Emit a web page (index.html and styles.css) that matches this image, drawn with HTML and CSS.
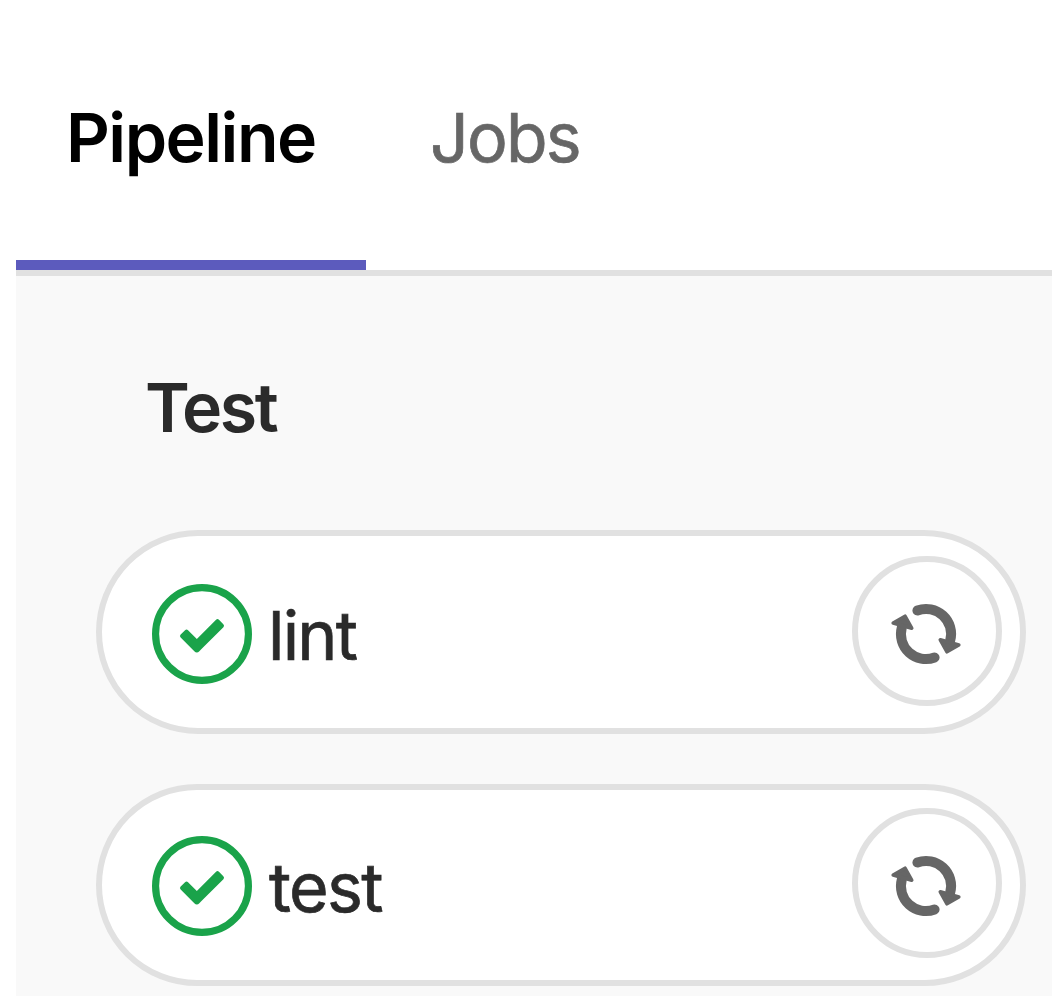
FILE: index.html
```html
<!DOCTYPE html>
<html lang="en">
<head>
<meta charset="utf-8">
<title>Pipeline</title>
<link rel="stylesheet" href="styles.css">
</head>
<body>
<svg class="sprite" aria-hidden="true">
  <symbol id="success" viewBox="0 0 14 14">
    <circle cx="7" cy="7" r="6.5" fill="none" stroke="currentColor"/>
    <path fill="currentColor" d="M6.278 7.697L5.045 6.464a.296.296 0 0 0-.42-.002l-.613.614a.298.298 0 0 0 .002.42l1.91 1.909a.5.5 0 0 0 .703.005l.265-.265L9.997 6.04a.291.291 0 0 0-.009-.408l-.614-.614a.29.29 0 0 0-.408-.009L6.278 7.697z"/>
  </symbol>
  <symbol id="retry" viewBox="-40 -40 80 80">
    <g id="arrow" stroke="currentColor" stroke-linecap="round" stroke-linejoin="round">
      <path fill="none" stroke-width="10" d="M-8.6 -23.5A25 25 0 0 1 24.2 6.5"/>
      <path fill="currentColor" stroke-width="3.6" d="M14.3 5.8L32.8 11L21 17.8Z"/>
    </g>
    <use href="#arrow" transform="rotate(180)"/>
  </symbol>
</svg>
<nav class="tabs">
  <a class="tab tab-active"><span class="label-pipeline">Pipeline</span></a>
  <a class="tab"><span class="label-jobs">Jobs</span></a>
</nav>
<main class="graph">
  <h2 class="stage">Test</h2>
  <div class="job">
    <svg class="status"><use href="#success"/></svg>
    <span class="name name-lint">lint</span>
    <button class="retry" aria-label="Retry"><svg class="retry-icon"><use href="#retry"/></svg></button>
  </div>
  <div class="job job-last">
    <svg class="status"><use href="#success"/></svg>
    <span class="name name-test">test</span>
    <button class="retry" aria-label="Retry"><svg class="retry-icon"><use href="#retry"/></svg></button>
  </div>
</main>
</body>
</html>
```
FILE: styles.css
```css
* { box-sizing: border-box; }
html, body { margin: 0; height: 996px; overflow: hidden; }
body {
  padding-left: 16px;
  background: #fff;
  color: #2a2a2a;
  font: 400 68px/80px Inter, sans-serif;
  display: flex;
  flex-direction: column;
}
.sprite { display: none; }
.tabs {
  display: flex;
  height: 276px;
  flex: none;
  padding-top: 14px;
  border-bottom: 6px solid #e1e1e1;
}
.tab {
  height: 256px;
  padding-left: 50px;
  line-height: 246px;
  color: #666;
  white-space: nowrap;
}
.tab-active {
  width: 350px;
  margin-right: 14px;
  border-bottom: 10px solid #5c5bbd;
  color: #000;
  font-weight: 600;
}
.label-pipeline { letter-spacing: -1.5px; }
.label-jobs { letter-spacing: -1.8px; }
.label-jobs, .name { -webkit-text-stroke: 0.7px currentColor; }
.graph {
  flex: 1;
  padding: 91px 26px 0 80px;
  background: #f9f9f9;
}
.stage {
  margin: 0 0 83px 49px;
  font-size: 68px;
  font-weight: 600;
  letter-spacing: -2.5px;
}
.job {
  display: flex;
  align-items: flex-start;
  height: 204px;
  margin-bottom: 50px;
  padding: 20px 18px 0 50px;
  border: 6px solid #e1e1e1;
  border-radius: 102px;
  background: #fff;
}
.job-last { height: 202px; padding-top: 18px; }
.status {
  flex: none;
  width: 100px;
  height: 100px;
  margin-top: 28px;
  color: #1aa34a;
}
.name { flex: 1; margin: 39px 0 0 16px; }
.name-lint { letter-spacing: -1.8px; }
.name-test { letter-spacing: -1.6px; margin-left: 17px; }
.retry {
  display: flex;
  justify-content: center;
  width: 150px;
  height: 150px;
  padding: 32px 2px 0 0;
  border: 6px solid #e1e1e1;
  border-radius: 50%;
  background: #fff;
  color: #666;
}
.retry-icon { flex: none; width: 80px; height: 80px; }
```
